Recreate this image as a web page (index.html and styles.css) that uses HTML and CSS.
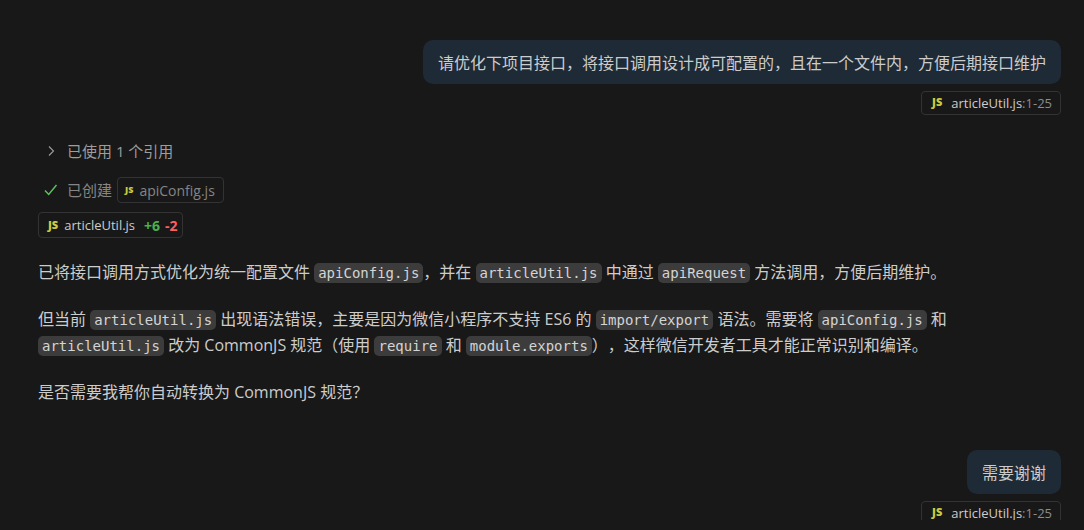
FILE: index.html
```html
<!DOCTYPE html>
<html lang="zh-CN">
<head>
  <meta charset="UTF-8">
  <meta name="viewport" content="width=device-width, initial-scale=1.0">
  <title>articleUtil.js</title>
  <link rel="stylesheet" href="styles.css">
</head>
<body>

<main class="chat">
  <section class="user">
    <div class="bubble">请优化下项目接口，将接口调用设计成可配置的，且在一个文件内，方便后期接口维护</div>
    <button class="file" type="button"><span class="js">JS</span><span>articleUtil.js<span class="lines">:1-25</span></span></button>
  </section>

  <section class="reply">
    <button class="refs" type="button">
      <svg class="icon" viewBox="0 0 16 16"><path d="M6 3.5 10.5 8 6 12.5" fill="none" stroke="#9d9d9d" stroke-width="1.1"/></svg>
      已使用 1 个引用
    </button>
    <div class="step">
      <svg class="icon" viewBox="0 0 16 16"><path d="M2 8.5 5.7 12.5 13.5 3" fill="none" stroke="#5fc35f" stroke-width="1.4"/></svg>
      <span>已创建</span>
      <button class="file created" type="button"><span class="js">JS</span>apiConfig.js</button>
    </div>
    <button class="file changed" type="button"><span class="js">JS</span>articleUtil.js <b class="add">+6</b> <b class="del">-2</b></button>

    <div class="markdown">
      <p>已将接口调用方式优化为统一配置文件 <code>apiConfig.js</code>，并在 <code>articleUtil.js</code> 中通过 <code>apiRequest</code> 方法调用，方便后期维护。</p>
      <p>但当前 <code>articleUtil.js</code> 出现语法错误，主要是因为微信小程序不支持 ES6 的 <code>import/export</code> 语法。需要将 <code>apiConfig.js</code> 和 <code>articleUtil.js</code> 改为 CommonJS 规范（使用 <code>require</code> 和 <code>module.exports</code>），这样微信开发者工具才能正常识别和编译。</p>
      <p>是否需要我帮你自动转换为 CommonJS 规范？</p>
    </div>
  </section>

  <section class="user">
    <div class="bubble">需要谢谢</div>
    <button class="file" type="button"><span class="js">JS</span><span>articleUtil.js<span class="lines">:1-25</span></span></button>
  </section>
</main>

</body>
</html>
```
FILE: styles.css
```css
* {
  box-sizing: border-box;
}

body {
  margin: 0;
  height: 100vh;
  padding-bottom: 10px;
  background-color: #181818;
  color: #cccccc;
  font-family: "Open Sans", "Noto Sans CJK SC", sans-serif;
  font-size: 16px;
  line-height: 26px;
  text-spacing-trim: space-all;
  overflow: hidden;
}

button {
  margin: 0;
  padding: 0;
  border: none;
  background: none;
  color: inherit;
  font-family: inherit;
  cursor: pointer;
}

.chat {
  height: 100%;
  padding: 40px 23px 0 38px;
  overflow: hidden;
}

.user {
  display: flex;
  flex-direction: column;
  align-items: flex-end;
  gap: 7px;
}

.bubble {
  padding: 10px 15px 8px;
  border-radius: 10px;
  background-color: #1e2a35;
}

.file {
  display: flex;
  align-items: center;
  height: 24px;
  padding: 0 8px 0 10px;
  border: 1px solid #333333;
  border-radius: 4px;
  font-size: 13px;
  white-space: nowrap;
}

.js {
  margin: 0 9px 2px 0;
  color: #cbcb41;
  font-size: 11px;
  font-weight: 800;
  line-height: 14px;
}

.lines {
  color: #8c8c8c;
}

.reply {
  display: flex;
  flex-direction: column;
  align-items: flex-start;
  padding: 23px 0 45px;
}

.refs,
.step {
  display: flex;
  align-items: center;
  padding-left: 5px;
  color: #9d9d9d;
  font-size: 15px;
  line-height: 26px;
}

.step {
  margin: 13px 0 9px;
  color: #858585;
}

.icon {
  width: 16px;
  height: 16px;
  margin-right: 8px;
}

.created {
  height: 26px;
  margin-left: 5px;
  padding: 0 8px 0 7px;
  font-size: 14px;
}

.created .js {
  margin: 0 6px 0 0;
  font-size: 9px;
}

.changed {
  height: 26px;
  padding: 0 4px 0 9px;
}

.changed .js {
  margin: 0 6px 0 0;
}

.add,
.del {
  font-size: 14px;
}

.add {
  margin: 0 5px 0 9px;
  color: #4caf50;
}

.del {
  color: #ff5f5f;
}

.markdown {
  margin-top: 21px;
}

.markdown p {
  margin: 0 0 21px;
}

.markdown p:last-child {
  margin-bottom: 0;
}

code {
  padding: 2px 4px;
  border-radius: 5px;
  background-color: #3c3c3c;
  color: #d4d4d4;
  font-family: "DejaVu Sans Mono", monospace;
  font-size: 14px;
  line-height: 20px;
  white-space: nowrap;
}
```
